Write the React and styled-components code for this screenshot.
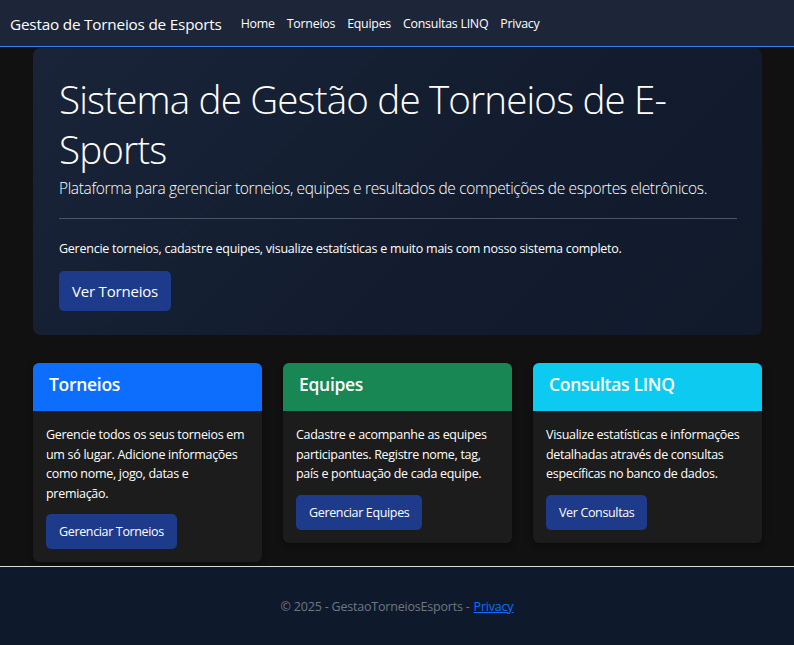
import React from 'react';
import styled, { createGlobalStyle } from 'styled-components';

const GlobalStyle = createGlobalStyle`
  html, body {
    margin: 0;
    padding: 0;
    background: #111111;
    font-family: "Open Sans", "Noto Sans", sans-serif;
    color: #ffffff;
  }
  * { box-sizing: border-box; }
`;

const Page = styled.div`
  min-height: 645px;
  display: flex;
  flex-direction: column;
`;

const Navbar = styled.nav`
  height: 47px;
  background: #1d2638;
  border-bottom: 1px solid #3b82f6;
  display: flex;
  align-items: center;
  padding: 1px 10px 0;
`;

const Brand = styled.a`
  font-size: 15.3px;
  color: #ffffff;
  margin-right: 19px;
  white-space: nowrap;
  letter-spacing: -0.2px;
`;

const NavLinks = styled.div`
  display: flex;
  gap: 12px;
`;

const NavLink = styled.a`
  font-size: 12.4px;
  color: #ffffff;
  letter-spacing: -0.25px;
`;

const Main = styled.main`
  flex: 1;
  padding: 0 32px 4px 33px;
`;

const Hero = styled.section`
  margin-top: 1px;
  border-radius: 8px;
  background: linear-gradient(135deg, #1a2439 0%, #121c2e 60%, #111a2b 100%);
  padding: 26px 25px 24px 26px;
`;

const Title = styled.h1`
  margin: 0;
  font-size: 38.6px;
  font-weight: 300;
  line-height: 50px;
  letter-spacing: -0.85px;
`;

const Lead = styled.p`
  margin: 2px 0 0;
  font-size: 15.5px;
  font-weight: 300;
  line-height: 24px;
  letter-spacing: -0.35px;
`;

const Divider = styled.hr`
  margin: 18px 0 20px;
  border: none;
  border-top: 1px solid #4b5566;
`;

const Text = styled.p`
  margin: 0 0 12px;
  font-size: 12.5px;
  line-height: 20px;
  letter-spacing: -0.25px;
`;

const Button = styled.a`
  display: inline-block;
  background: #1e3a8a;
  color: #ffffff;
  border-radius: 5px;
  font-size: ${p => (p.$large ? '15px' : '12.5px')};
  line-height: ${p => (p.$large ? '40px' : '35px')};
  padding: 0 13px;
  letter-spacing: ${p => (p.$large ? '-0.2px' : '-0.35px')};
`;

const Cards = styled.div`
  margin-top: 28px;
  display: grid;
  grid-template-columns: repeat(3, 229px);
  column-gap: 21px;
  align-items: start;
`;

const Card = styled.div`
  background: #1c1c1c;
  border-radius: 6px;
  overflow: hidden;
  box-shadow: 0 2px 6px rgba(0, 0, 0, 0.4);
`;

const CardHeader = styled.div`
  height: 48px;
  background: ${p => p.$color};
  display: flex;
  align-items: center;
  padding: 0 16px 6px;
  font-size: 17.5px;
  font-weight: 600;
  letter-spacing: -0.3px;
`;

const CardBody = styled.div`
  padding: 14px 13px 13px;
`;

const CardText = styled.p`
  margin: 0 0 11px;
  font-size: 12.5px;
  line-height: 19.5px;
  letter-spacing: -0.3px;
`;

const Footer = styled.footer`
  height: 79px;
  background: #0e1a2b;
  border-top: 1px solid #d9dde3;
  display: flex;
  align-items: center;
  justify-content: center;
  font-size: 12.5px;
  color: #6f7782;
  letter-spacing: -0.2px;
`;

const FooterLink = styled.a`
  color: #0d6efd;
  text-decoration: underline;
  margin-left: 4px;
`;

const cards = [
  {
    title: 'Torneios',
    color: '#0d6efd',
    text: 'Gerencie todos os seus torneios em um só lugar. Adicione informações como nome, jogo, datas e premiação.',
    action: 'Gerenciar Torneios',
  },
  {
    title: 'Equipes',
    color: '#198754',
    text: 'Cadastre e acompanhe as equipes participantes. Registre nome, tag, país e pontuação de cada equipe.',
    action: 'Gerenciar Equipes',
  },
  {
    title: 'Consultas LINQ',
    color: '#0dcaf0',
    text: 'Visualize estatísticas e informações detalhadas através de consultas específicas no banco de dados.',
    action: 'Ver Consultas',
  },
];

export default function App() {
  return (
    <>
      <GlobalStyle />
      <Page>
        <Navbar>
          <Brand>Gestao de Torneios de Esports</Brand>
          <NavLinks>
            <NavLink>Home</NavLink>
            <NavLink>Torneios</NavLink>
            <NavLink>Equipes</NavLink>
            <NavLink>Consultas LINQ</NavLink>
            <NavLink>Privacy</NavLink>
          </NavLinks>
        </Navbar>
        <Main>
          <Hero>
            <Title>Sistema de Gestão de Torneios de E-Sports</Title>
            <Lead>Plataforma para gerenciar torneios, equipes e resultados de competições de esportes eletrônicos.</Lead>
            <Divider />
            <Text>Gerencie torneios, cadastre equipes, visualize estatísticas e muito mais com nosso sistema completo.</Text>
            <Button $large>Ver Torneios</Button>
          </Hero>
          <Cards>
            {cards.map(c => (
              <Card key={c.title}>
                <CardHeader $color={c.color}>{c.title}</CardHeader>
                <CardBody>
                  <CardText>{c.text}</CardText>
                  <Button>{c.action}</Button>
                </CardBody>
              </Card>
            ))}
          </Cards>
        </Main>
        <Footer>
          © 2025 - GestaoTorneiosEsports -<FooterLink>Privacy</FooterLink>
        </Footer>
      </Page>
    </>
  );
}
